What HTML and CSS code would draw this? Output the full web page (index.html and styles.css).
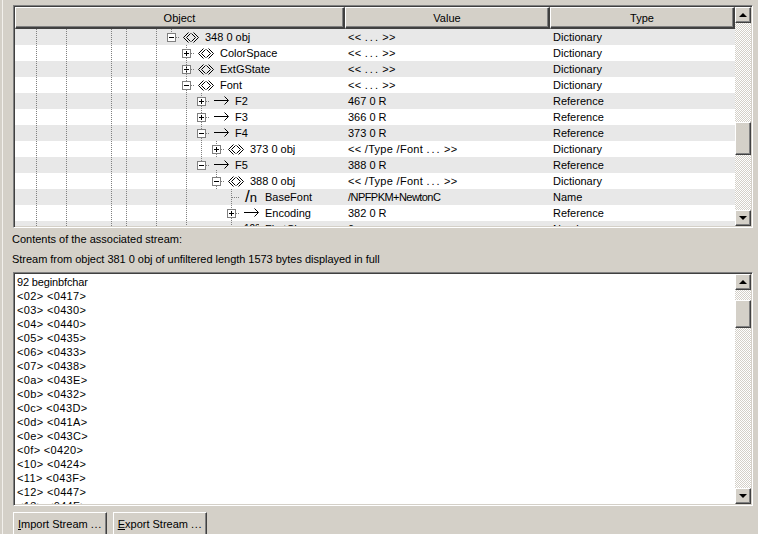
FILE: index.html
```html
<!DOCTYPE html>
<html lang="en">
<head>
<meta charset="utf-8">
<title>Object browser</title>
<link rel="stylesheet" href="styles.css">
</head>
<body>
<div class="window">
  <section class="panel tree-panel">
    <div class="panel-main">
      <div class="thead">
        <div class="th col-object">Object</div>
        <div class="th col-value">Value</div>
        <div class="th col-type">Type</div>
      </div>
      <div class="tbody">
        <div class="row"><div class="cell col-object d0"><span class="exp minus"></span><svg class="ico" viewBox="0 0 16 12"><use href="#dict"/></svg><span class="lbl">348 0 obj</span></div><div class="cell col-value wide">&lt;&lt; <span class="dots">...</span> &gt;&gt;</div><div class="cell col-type">Dictionary</div></div>
        <div class="row"><div class="cell col-object d1"><span class="exp plus"></span><svg class="ico" viewBox="0 0 16 12"><use href="#dict"/></svg><span class="lbl">ColorSpace</span></div><div class="cell col-value wide">&lt;&lt; <span class="dots">...</span> &gt;&gt;</div><div class="cell col-type">Dictionary</div></div>
        <div class="row"><div class="cell col-object d1"><span class="exp plus"></span><svg class="ico" viewBox="0 0 16 12"><use href="#dict"/></svg><span class="lbl">ExtGState</span></div><div class="cell col-value wide">&lt;&lt; <span class="dots">...</span> &gt;&gt;</div><div class="cell col-type">Dictionary</div></div>
        <div class="row"><div class="cell col-object d1"><span class="exp minus"></span><svg class="ico" viewBox="0 0 16 12"><use href="#dict"/></svg><span class="lbl">Font</span></div><div class="cell col-value wide">&lt;&lt; <span class="dots">...</span> &gt;&gt;</div><div class="cell col-type">Dictionary</div></div>
        <div class="row"><div class="cell col-object d2"><span class="exp plus"></span><svg class="ico" viewBox="0 0 16 12"><use href="#ref"/></svg><span class="lbl">F2</span></div><div class="cell col-value">467 0 R</div><div class="cell col-type">Reference</div></div>
        <div class="row"><div class="cell col-object d2"><span class="exp plus"></span><svg class="ico" viewBox="0 0 16 12"><use href="#ref"/></svg><span class="lbl">F3</span></div><div class="cell col-value">366 0 R</div><div class="cell col-type">Reference</div></div>
        <div class="row"><div class="cell col-object d2"><span class="exp minus"></span><svg class="ico" viewBox="0 0 16 12"><use href="#ref"/></svg><span class="lbl">F4</span></div><div class="cell col-value">373 0 R</div><div class="cell col-type">Reference</div></div>
        <div class="row"><div class="cell col-object d3"><span class="exp plus"></span><svg class="ico" viewBox="0 0 16 12"><use href="#dict"/></svg><span class="lbl">373 0 obj</span></div><div class="cell col-value wide">&lt;&lt; /Type /Font <span class="dots">...</span> &gt;&gt;</div><div class="cell col-type">Dictionary</div></div>
        <div class="row"><div class="cell col-object d2"><span class="exp minus"></span><svg class="ico" viewBox="0 0 16 12"><use href="#ref"/></svg><span class="lbl">F5</span></div><div class="cell col-value">388 0 R</div><div class="cell col-type">Reference</div></div>
        <div class="row"><div class="cell col-object d3"><span class="exp minus"></span><svg class="ico" viewBox="0 0 16 12"><use href="#dict"/></svg><span class="lbl">388 0 obj</span></div><div class="cell col-value wide">&lt;&lt; /Type /Font <span class="dots">...</span> &gt;&gt;</div><div class="cell col-type">Dictionary</div></div>
        <div class="row"><div class="cell col-object d4"><span class="exp none"></span><span class="ico name-ico"><span class="slash">/</span>n</span><span class="lbl">BaseFont</span></div><div class="cell col-value tight">/NPFPKM+NewtonC</div><div class="cell col-type">Name</div></div>
        <div class="row"><div class="cell col-object d4"><span class="exp plus"></span><svg class="ico" viewBox="0 0 16 12"><use href="#ref"/></svg><span class="lbl">Encoding</span></div><div class="cell col-value">382 0 R</div><div class="cell col-type">Reference</div></div>
        <div class="row"><div class="cell col-object d4"><span class="exp none"></span><span class="ico num-ico">123</span><span class="lbl">FirstChar</span></div><div class="cell col-value">0</div><div class="cell col-type">Number</div></div>
        <svg class="guides" width="720" height="197" viewBox="0 0 720 197">
          <path d="M21.5 0V197M51.5 0V197M96.5 0V197M111.5 0V197M141.5 0V197M156.5 0V4M171.5 16V20M171.5 29V52M171.5 61V197M186.5 64V68M186.5 77V84M186.5 93V100M186.5 109V132M201.5 112V116M201.5 125V128M201.5 141V148M201.5 157V160M216.5 160V180M216.5 189V197"/>
          <path d="M161 8.500H165M176 24.500H180M176 40.500H180M176 56.500H180M191 72.500H195M191 88.500H195M191 104.500H195M206 120.500H210M191 136.500H195M206 152.500H210M217 168.500H224M221 184.500H225"/>
        </svg>
      </div>
    </div>
    <div class="scrollbar">
      <div class="sb-btn up"></div>
      <div class="track tree-before"></div>
      <div class="thumb tree-thumb"></div>
      <div class="track fill"></div>
      <div class="sb-btn down"></div>
    </div>
  </section>

  <p class="label first">Contents of the associated stream:</p>
  <p class="label second">Stream from object 381 0 obj of unfiltered length 1573 bytes displayed in full</p>

  <section class="panel stream-panel">
    <div class="panel-main stream"><span class="stream-head">92 beginbfchar</span>
&lt;02&gt; &lt;0417&gt;
&lt;03&gt; &lt;0430&gt;
&lt;04&gt; &lt;0440&gt;
&lt;05&gt; &lt;0435&gt;
&lt;06&gt; &lt;0433&gt;
&lt;07&gt; &lt;0438&gt;
&lt;0a&gt; &lt;043E&gt;
&lt;0b&gt; &lt;0432&gt;
&lt;0c&gt; &lt;043D&gt;
&lt;0d&gt; &lt;041A&gt;
&lt;0e&gt; &lt;043C&gt;
&lt;0f&gt; &lt;0420&gt;
&lt;10&gt; &lt;0424&gt;
&lt;11&gt; &lt;043F&gt;
&lt;12&gt; &lt;0447&gt;
&lt;13&gt; &lt;044F&gt;</div>
    <div class="scrollbar">
      <div class="sb-btn up"></div>
      <div class="track stream-before"></div>
      <div class="thumb stream-thumb"></div>
      <div class="track fill"></div>
      <div class="sb-btn down"></div>
    </div>
  </section>

  <div class="actions">
    <button class="btn" type="button"><u>I</u>mport Stream <span class="btn-dots">...</span></button>
    <button class="btn" type="button"><u>E</u>xport Stream <span class="btn-dots">...</span></button>
  </div>
</div>

<svg class="defs" width="0" height="0" aria-hidden="true">
  <symbol id="dict" viewBox="0 0 16 12">
    <path class="ico-line" d="M5.500 1.500L0.500 6.500L5.500 11.500M7.500 2.500L3.500 6.500L7.500 10.500M10.500 1.500L15.500 6.500L10.500 11.500M8.500 2.500L12.500 6.500L8.500 10.500"/>
  </symbol>
  <symbol id="ref" viewBox="0 0 16 12">
    <path class="ico-line" d="M1 5.500H15"/>
    <path class="ico-head" d="M11.500 1.500L15.500 5.500L11.500 9.500"/>
  </symbol>
</svg>
</body>
</html>
```

FILE: styles.css
```css
* { box-sizing: border-box; }
html, body { margin: 0; padding: 0; }
body { background: #d4d0c8; }
.window {
  width: 758px;
  height: 534px;
  overflow: hidden;
  padding: 5px 0 0 13px;
  background: linear-gradient(#f2f0ec, #f2f0ec) 2px 0 / 1px 100% no-repeat #d4d0c8;
  font-family: "Liberation Sans", Arial, sans-serif;
  font-size: 11px;
  color: #000;
}
.panel {
  display: flex;
  width: 740px;
  background: #fff;
  border-style: solid;
  border-width: 1px;
  border-color: #808080 #fff #fff #808080;
  box-shadow: inset 1px 1px 0 #404040, inset -1px -1px 0 #d4d0c8;
  padding: 1px;
}
.tree-panel { height: 223px; }
.stream-panel { height: 234px; }
.panel-main {
  flex: 0 0 720px;
  width: 720px;
  overflow: hidden;
  position: relative;
}
.thead { display: flex; height: 22px; }
.th {
  display: flex;
  align-items: center;
  justify-content: center;
  background: #d4d0c8;
  border-style: solid;
  border-width: 1px 2px 2px 1px;
  border-color: #fff #404040 #404040 #fff;
  box-shadow: inset -1px -1px 0 #808080;
  line-height: 14px;
}
.col-object { width: 330px; flex: 0 0 330px; }
.col-value { width: 205px; flex: 0 0 205px; }
.col-type { width: 185px; flex: 0 0 185px; }
.tbody { position: relative; height: 197px; overflow: hidden; }
.row {
  display: flex;
  height: 16px;
  line-height: 16px;
  background: #fff;
}
.row:nth-child(odd) { background: #e8e8e8; }
.cell { padding-left: 3px; white-space: nowrap; }
.col-object.cell { display: flex; align-items: center; }
.wide { letter-spacing: 0.3px; }
.dots { letter-spacing: 2px; margin-right: -1px; }
.tight { letter-spacing: -0.55px; }
.d0 { padding-left: 152px; }
.d1 { padding-left: 167px; }
.d2 { padding-left: 182px; }
.d3 { padding-left: 197px; }
.d4 { padding-left: 212px; }
.exp {
  position: relative;
  flex: 0 0 9px;
  width: 9px;
  height: 9px;
  border: 1px solid #808080;
  background: #fff;
}
.exp.none { border: 0; background: none; }
.exp.plus::before, .exp.minus::before {
  content: "";
  position: absolute;
  left: 1px;
  top: 3px;
  width: 5px;
  height: 1px;
  background: #000;
}
.exp.plus::after {
  content: "";
  position: absolute;
  left: 3px;
  top: 1px;
  width: 1px;
  height: 5px;
  background: #000;
}
.ico {
  flex: 0 0 16px;
  width: 16px;
  height: 12px;
  margin-left: 7px;
  overflow: hidden;
}
.ico-line { fill: none; stroke: #000; stroke-width: 1; }
.ico-head { fill: none; stroke: #000; stroke-width: 1; }
.name-ico {
  display: flex;
  align-items: flex-end;
  height: 16px;
  padding-left: 2px;
  font-size: 13px;
  line-height: 14px;
}
.slash { font-size: 17px; line-height: 16px; }
.num-ico {
  height: 16px;
  line-height: 16px;
  padding-left: 1px;
  font-size: 10px;
}
.lbl { margin-left: 6px; }
.guides {
  position: absolute;
  left: 0;
  top: 0;
  pointer-events: none;
}
.guides path {
  fill: none;
  stroke: #808080;
  stroke-width: 1;
  stroke-dasharray: 1 1;
  shape-rendering: crispEdges;
}
.scrollbar {
  flex: 0 0 16px;
  width: 16px;
  display: flex;
  flex-direction: column;
}
.sb-btn, .thumb {
  background: #d4d0c8;
  border-style: solid;
  border-width: 1px;
  border-color: #fff #404040 #404040 #fff;
  box-shadow: inset -1px -1px 0 #808080;
}
.sb-btn {
  position: relative;
  flex: 0 0 16px;
  height: 16px;
}
.sb-btn::after {
  content: "";
  position: absolute;
  left: 3px;
  width: 0;
  height: 0;
  border-left: 4px solid transparent;
  border-right: 4px solid transparent;
}
.sb-btn.up::after { top: 5px; border-bottom: 4px solid #000; }
.sb-btn.down::after { top: 5px; border-top: 4px solid #000; }
.track, .fill {
  background: conic-gradient(#d4d0c8 25%, #fff 0 50%, #d4d0c8 0 75%, #fff 0) 0 0 / 2px 2px;
}
.fill { flex: 1 1 auto; }
.tree-before { flex: 0 0 99px; }
.tree-thumb { flex: 0 0 33px; }
.stream-before { flex: 0 0 10px; }
.stream-thumb { flex: 0 0 28px; }
.label {
  margin: 0;
  line-height: 14px;
  margin-left: -1px;
  white-space: nowrap;
}
.label.first { margin-top: 4px; }
.label.second { margin-top: 6px; letter-spacing: -0.03px; }
.stream-panel { margin-top: 6px; }
.stream {
  padding: 1px 0 0 2px;
  line-height: 14px;
  white-space: pre;
  letter-spacing: 0.35px;
}
.stream-head { letter-spacing: -0.15px; }
.actions { display: flex; gap: 6px; margin-top: 6px; }
.btn {
  width: 94px;
  height: 24px;
  padding: 0;
  font: inherit;
  color: #000;
  background: #d4d0c8;
  border-style: solid;
  border-width: 1px;
  border-color: #fff #404040 #404040 #fff;
  box-shadow: inset -1px -1px 0 #808080;
}
.btn-dots { letter-spacing: 0.7px; }
.defs { position: absolute; }
```
